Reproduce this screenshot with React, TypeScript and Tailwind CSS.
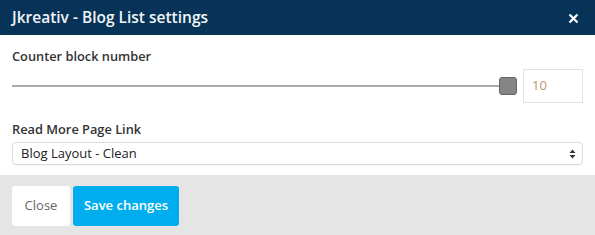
export default function App() {
  return (
    <div className="w-[595px] h-[235px] bg-white font-['Open_Sans',sans-serif] flex flex-col overflow-hidden">
      <div className="h-[35px] bg-[#083358] flex items-center justify-between pl-[12px] pr-[16px]">
        <h1 className="text-[15.5px] font-semibold text-[#f1f4f7] leading-none">Jkreativ - Blog List settings</h1>
        <svg width="11" height="11" viewBox="0 0 11 11" className="mt-[2px]">
          <path d="M1.5 1.5 L9.5 9.5 M9.5 1.5 L1.5 9.5" stroke="#ffffff" strokeWidth="2.2" />
        </svg>
      </div>
      <div className="flex-1 flex flex-col px-[12px] pt-[12px]">
        <label className="text-[12.8px] font-semibold text-[#333] leading-[18px]">Counter block number</label>
        <div className="flex items-center mt-[4px]">
          <div className="flex-1 flex items-center">
            <div className="flex-1 h-[2px] bg-[#aaaaaa]" />
            <div className="w-[18px] h-[18px] rounded-[3px] bg-[#858585] border border-[#666]" />
          </div>
          <div className="ml-[6px] w-[60px] h-[34px] border border-[#e3e3e3] flex items-center pl-[8px] text-[13px] text-[#b89a6a]">10</div>
        </div>
        <label className="mt-[17px] text-[12.8px] font-semibold text-[#333] leading-[18px]">Read More Page Link</label>
        <div className="mt-[4px] h-[23px] border border-[#dcdcdc] rounded-[4px] flex items-center justify-between pl-[8px] pr-[6px] shadow-[0_1px_1px_rgba(0,0,0,0.04)]">
          <span className="text-[13px] text-[#222]">Blog Layout - Clean</span>
          <svg width="7" height="10" viewBox="0 0 7 10">
            <path d="M3.5 0.5 L6.5 4 L0.5 4 Z M3.5 9.5 L6.5 6 L0.5 6 Z" fill="#333" />
          </svg>
        </div>
      </div>
      <div className="h-[60px] bg-[#e5e5e5] flex items-start gap-[3px] px-[12px] pt-[11px]">
        <button className="h-[40px] w-[58px] bg-white rounded-[3px] text-[13px] text-[#666]">Close</button>
        <button className="h-[40px] w-[106px] bg-[#00aeef] rounded-[3px] text-[13px] font-semibold text-white">Save changes</button>
      </div>
    </div>
  )
}
